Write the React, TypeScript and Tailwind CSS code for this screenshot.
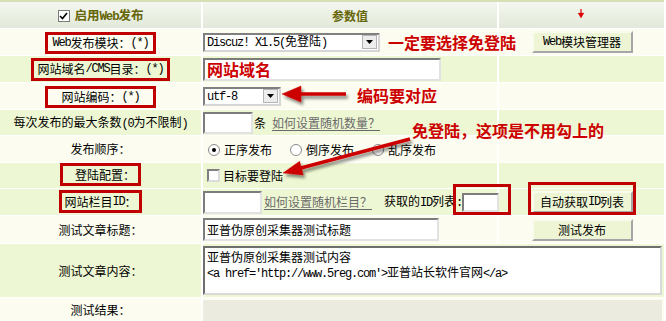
import React from "react";

const CJK = /([\u2E80-\u9FFF\uFF00-\uFFEF\u3000-\u303F]+)/;

function M({ t }: { t: string }) {
  const parts = t.split(CJK);
  return (
    <>
      {parts.map((p, i) =>
        p === "" ? null : i % 2 === 1 ? (
          <span key={i}>{p}</span>
        ) : (
          <span key={i} className="[font-family:'Liberation_Mono',monospace] tracking-[-1.2px]">
            {p}
          </span>
        )
      )}
    </>
  );
}

const G = "bg-[#eef7d3]";
const C = "bg-[#fcfdf0]";

const inputCls =
  "bg-white border-2 border-t-[#7c7c7c] border-l-[#7c7c7c] border-r-[#e2e2e2] border-b-[#e2e2e2]";

function Btn({ label, w = "w-[101px]" }: { label: string; w?: string }) {
  return (
    <div
      className={`${w} h-[22px] bg-[#eef5d5] border-2 border-t-[#f9fbef] border-l-[#f9fbef] border-r-[#a6a6a6] border-b-[#a6a6a6] flex items-center justify-center text-[12px] leading-none whitespace-nowrap`}
    >
      <M t={label} />
    </div>
  );
}

function Sel({ text, w }: { text: string; w: string }) {
  return (
    <div
      className={`${w} h-[19px] bg-white border-2 border-t-[#808080] border-l-[#808080] border-r-[#d6d6d6] border-b-[#d6d6d6] flex items-center justify-between pl-[2px] pr-px leading-none`}
    >
      <span className="whitespace-pre">
        <M t={text} />
      </span>
      <div className="w-[15px] h-[14px] bg-[#ededed] border border-[#b4b4b4] flex items-center justify-center">
        <svg width="7" height="4" viewBox="0 0 7 4">
          <polygon points="0,0 7,0 3.5,4" fill="#000" />
        </svg>
      </div>
    </div>
  );
}

function Radio({ checked }: { checked?: boolean }) {
  return (
    <svg width="12" height="12" viewBox="0 0 12 12">
      <circle cx="6" cy="6" r="5.5" fill="#fff" stroke="#8a8a8a" />
      {checked && <circle cx="6" cy="6" r="2" fill="#000" />}
    </svg>
  );
}

export default function App() {
  return (
    <div className="relative w-[666px] h-[321px] overflow-hidden bg-white text-[12px] text-black [font-family:'Noto_Sans_CJK_SC',sans-serif]">
      <div className="grid w-[664px] grid-cols-[201px_294px_165px] gap-x-[2px] gap-y-px border-t-2 border-[#d6dfb5] bg-white">
        {/* header */}
        <div className="h-[26px] bg-gradient-to-b from-[#f4f7ef] to-[#e2e9d9] flex items-center justify-center pt-[2px] font-bold text-[#666608]">
          <span className="w-[12px] h-[12px] bg-white border border-[#7a7a7a] flex items-center justify-center mr-[5px]">
            <svg width="9" height="8" viewBox="0 0 9 8">
              <polyline points="1,4 3.5,6.5 8,1" fill="none" stroke="#000" strokeWidth="1.6" />
            </svg>
          </span>
          <span className="leading-none text-[12.5px]">
            <M t="启用Web发布" />
          </span>
        </div>
        <div className="h-[26px] bg-gradient-to-b from-[#f4f7ef] to-[#e2e9d9] flex items-center justify-center pt-[2px] font-bold text-[#666608] leading-none">
          参数值
        </div>
        <div className="h-[26px] bg-gradient-to-b from-[#f4f7ef] to-[#e2e9d9]" />

        {/* row1 */}
        <div className={`h-[26px] ${C} flex items-center justify-center`}>
          <span className="inline-flex items-center h-[22px] mt-[1px] px-[4px] border-[3px] border-[#c00000] leading-none">
            <M t="Web发布模块：(*)" />
          </span>
        </div>
        <div className={`h-[26px] ${C} flex items-center`}>
          <Sel text="Discuz! X1.5(免登陆)" w="w-[177px]" />
        </div>
        <div className={`h-[26px] ${C} flex items-center justify-center pl-px`}>
          <Btn label="Web模块管理器" />
        </div>

        {/* row2 */}
        <div className={`h-[26px] ${G} flex items-center justify-center`}>
          <span className="inline-flex items-center h-[23px] px-[3px] border-[3px] border-[#c00000] leading-none">
            <M t="网站域名/CMS目录：(*)" />
          </span>
        </div>
        <div className={`h-[26px] ${G} flex items-center`}>
          <div className={`w-[238px] h-[23px] ${inputCls} flex items-center pl-[2px] text-[16px] font-bold text-[#cc0000] leading-none`}>
            网站域名
          </div>
        </div>
        <div className={`h-[26px] ${G}`} />

        {/* row3 */}
        <div className={`h-[26px] ${C} flex items-center justify-center`}>
          <span className="inline-flex items-center h-[22px] mt-[1px] px-[13px] border-[3px] border-[#c00000] leading-none">
            <M t="网站编码：(*)" />
          </span>
        </div>
        <div className={`h-[26px] ${C} flex items-center`}>
          <Sel text="utf-8" w="w-[78px]" />
        </div>
        <div className={`h-[26px] ${C}`} />

        {/* row4 */}
        <div className={`h-[25px] ${G} flex items-center justify-center`}>
          <span className="leading-none whitespace-nowrap">
            <M t="每次发布的最大条数(0为不限制)" />
          </span>
        </div>
        <div className={`h-[25px] ${G} flex items-center whitespace-nowrap`}>
          <div className={`w-[50px] h-[22px] shrink-0 ${inputCls}`} />
          <span className="ml-px leading-none">条</span>
          <span className="ml-[6px] leading-none text-[#6a6a6a] underline underline-offset-2">如何设置随机数量？</span>
        </div>
        <div className={`h-[25px] ${G}`} />

        {/* row5 */}
        <div className={`h-[26px] ${C} flex items-center justify-center`}>
          <span className="leading-none">发布顺序：</span>
        </div>
        <div className={`h-[26px] ${C} flex items-center pl-[5px] pt-[1px] leading-none whitespace-nowrap`}>
          <Radio checked />
          <span className="ml-[4px]">正序发布</span>
          <span className="ml-[18px] flex">
            <Radio />
          </span>
          <span className="ml-[4px]">倒序发布</span>
          <span className="ml-[18px] flex">
            <Radio />
          </span>
          <span className="ml-[4px]">乱序发布</span>
        </div>
        <div className={`h-[26px] ${C}`} />

        {/* row6 */}
        <div className={`h-[25px] ${G} flex items-start justify-center`}>
          <span className="inline-flex items-center h-[23px] pl-[12px] pr-[3px] border-[3px] border-[#c00000] leading-none">
            登陆配置：
          </span>
        </div>
        <div className={`h-[25px] ${G} flex items-center pl-[4px] leading-none`}>
          <span className="w-[13px] h-[13px] bg-white border-2 border-t-[#808080] border-l-[#808080] border-r-[#dcdcdc] border-b-[#dcdcdc]" />
          <span className="ml-[3px]">目标要登陆</span>
        </div>
        <div className={`h-[25px] ${G}`} />

        {/* row7 */}
        <div className={`h-[26px] ${G} flex items-start justify-center`}>
          <span className="inline-flex items-center h-[23px] mt-px px-[2px] border-[3px] border-[#c00000] leading-none">
            <M t="网站栏目ID：" />
          </span>
        </div>
        <div className={`h-[26px] ${G} flex items-center leading-none whitespace-nowrap overflow-visible`}>
          <div className={`w-[59px] h-[23px] shrink-0 ${inputCls}`} />
          <span className="shrink-0 ml-[2px] text-[#6a6a6a] underline underline-offset-2">如何设置随机栏目？</span>
          <span className="shrink-0 ml-[12px]">
            <M t="获取的ID列表:" />
          </span>
          <div className={`shrink-0 ml-auto w-[37px] h-[19px] ${inputCls}`} />
        </div>
        <div className={`h-[26px] ${G} flex items-center justify-center pl-px`}>
          <Btn label="自动获取ID列表" />
        </div>

        {/* row8 */}
        <div className={`h-[27px] ${C} flex items-center justify-center`}>
          <span className="leading-none">测试文章标题：</span>
        </div>
        <div className={`h-[27px] ${C} flex items-center`}>
          <div className={`w-[236px] h-[23px] ${inputCls} flex items-center pl-[2px] leading-none whitespace-nowrap`}>
            亚普伪原创采集器测试标题
          </div>
        </div>
        <div className={`h-[27px] ${C} flex items-center justify-center pl-px`}>
          <Btn label="测试发布" />
        </div>

        {/* row9 */}
        <div className={`h-[53px] ${G} flex items-center justify-center`}>
          <span className="leading-none">测试文章内容：</span>
        </div>
        <div className={`h-[53px] ${G} col-span-2 pt-[2px]`}>
          <div className="w-[459px] h-[49px] bg-white border-2 border-t-[#6e6e6e] border-l-[#6e6e6e] border-r-[#dadada] border-b-[#dadada] pl-[2px] pt-[1px] leading-[15px]">
            <div>亚普伪原创采集器测试内容</div>
            <div className="whitespace-pre">
              <M t="<a href='http://www.5reg.com'>亚普站长软件官网</a>" />
            </div>
          </div>
        </div>

        {/* row10 */}
        <div className={`h-[24px] ${C} flex items-center justify-center`}>
          <span className="leading-none">测试结果：</span>
        </div>
        <div className={`h-[24px] ${C} col-span-2 pt-[2px]`}>
          <div className="w-[459px] h-full bg-[#ecebdf]" />
        </div>
      </div>

      {/* annotations */}
      <div className="absolute left-[388px] top-[34px] text-[16px] font-bold text-[#cc0000] leading-none whitespace-nowrap">
        一定要选择免登陆
      </div>
      <div className="absolute left-[357px] top-[87px] text-[16px] font-bold text-[#cc0000] leading-none whitespace-nowrap">
        编码要对应
      </div>
      <div className="absolute left-[412px] top-[122px] text-[16px] font-bold text-[#cc0000] leading-none whitespace-nowrap">
        免登陆，这项是不用勾上的
      </div>
      <div className="absolute left-[453px] top-[184px] w-[58px] h-[31px] border-[3px] border-[#c00000]" />
      <div className="absolute left-[528px] top-[182px] w-[108px] h-[33px] border-[3px] border-[#c00000]" />

      <svg className="absolute left-0 top-0 pointer-events-none" width="666" height="321" viewBox="0 0 666 321">
        <defs>
          <filter id="sh" x="-30%" y="-80%" width="160%" height="260%">
            <feGaussianBlur in="SourceAlpha" stdDeviation="1.6" />
            <feOffset dx="2" dy="3" result="o" />
            <feComponentTransfer>
              <feFuncA type="linear" slope="0.45" />
            </feComponentTransfer>
            <feMerge>
              <feMergeNode />
              <feMergeNode in="SourceGraphic" />
            </feMerge>
          </filter>
        </defs>
        <g filter="url(#sh)" fill="#cc0000" stroke="#cc0000">
          <line x1="298" y1="94" x2="346" y2="94" strokeWidth="3.5" />
          <polygon points="282,94 301,86 301,102" strokeWidth="0.5" />
        </g>
        <g filter="url(#sh)" fill="#cc0000" stroke="#cc0000">
          <line x1="410" y1="139" x2="299" y2="168.5" strokeWidth="3.5" />
          <polygon points="283,173 303.2,174.9 299.6,161.3" strokeWidth="0.5" />
        </g>
        <g fill="#dd0000" stroke="#dd0000">
          <line x1="581" y1="9" x2="581" y2="14" strokeWidth="1.2" />
          <polygon points="578,13 584,13 581,18" strokeWidth="0.3" />
        </g>
      </svg>
    </div>
  );
}
